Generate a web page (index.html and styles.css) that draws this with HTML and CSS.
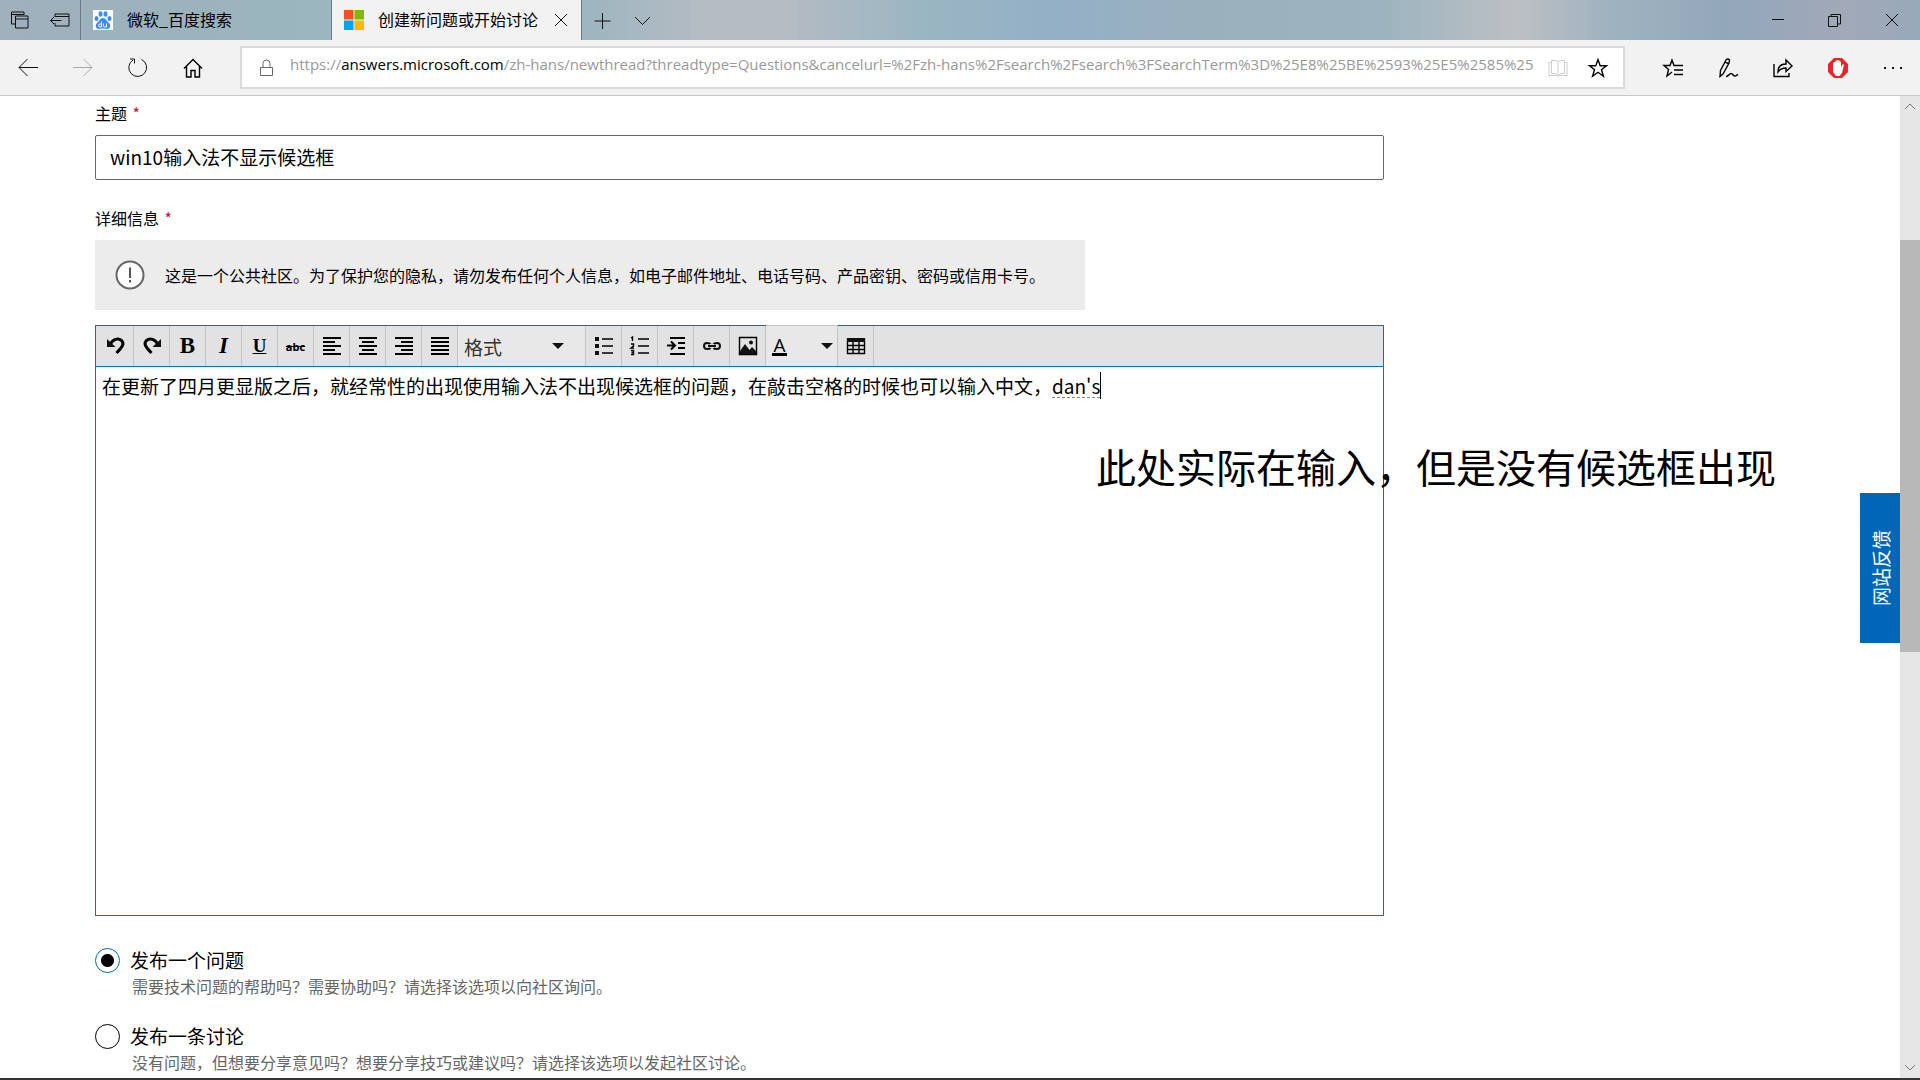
FILE: index.html
```html
<!DOCTYPE html>
<html lang="zh-Hans">
<head>
    <meta charset="UTF-8">
    <meta name="viewport" content="width=device-width, initial-scale=1.0">
    <title>创建新问题或开始讨论</title>
    <link rel="stylesheet" href="styles.css">
</head>
<body>

    <!-- Tab strip -->
    <header class="tab-strip">
        <button class="strip-btn" aria-label="已搁置的标签页">
            <svg width="20" height="20" viewBox="0 0 20 20"><path d="M5 14H1.500V2H14v3M1.500 4.500H14M5.500 6h12.500v12H5.500zM5.500 9H18"/></svg>
        </button>
        <button class="strip-btn" aria-label="搁置标签页">
            <svg width="20" height="20" viewBox="0 0 20 20"><path d="M5 7V4h14v12H5V13M5 6.500h14M0.500 10.500h11M4 7L0.500 10.500L4 14"/></svg>
        </button>
        <div class="tab">
            <svg class="favicon" width="20" height="20" viewBox="0 0 20 20">
                <rect width="20" height="20" fill="#fff"/>
                <g fill="#3b8cff">
                    <ellipse cx="3.500" cy="8.500" rx="2" ry="2.600"/>
                    <ellipse cx="7.500" cy="4" rx="2" ry="2.800"/>
                    <ellipse cx="12.500" cy="4" rx="2" ry="2.800"/>
                    <ellipse cx="16.500" cy="8.500" rx="2" ry="2.600"/>
                    <path d="M10 8c3 0 3.500 3 6 5 2.500 2.500 1 6-2 6-1.500 0-2.500-.5-4-.5s-2.500.5-4 .5c-3 0-4.500-3.500-2-6C6.500 11 7 8 10 8z"/>
                </g>
                <path d="M8.500 11.500v5.500H7a1.500 1.500 0 0 1 0-3h1.500M10.500 13.500v2.500q0 1 1 1h2v-3.500" fill="none" stroke="#fff"/>
            </svg>
            <span class="tab-title">微软_百度搜索</span>
        </div>
        <div class="tab tab-active">
            <svg class="favicon" width="20" height="20" viewBox="0 0 20 20">
                <path fill="#f25022" d="M0 0h9.500v9.500H0z"/><path fill="#7fba00" d="M10.500 0H20v9.500h-9.500z"/>
                <path fill="#00a4ef" d="M0 10.500h9.500V20H0z"/><path fill="#ffb900" d="M10.500 10.500H20V20h-9.500z"/>
            </svg>
            <span class="tab-title">创建新问题或开始讨论</span>
            <button class="tab-close" aria-label="关闭标签页">
                <svg width="14" height="14" viewBox="0 0 14 14"><path d="M1 1l12 12M13 1L1 13"/></svg>
            </button>
        </div>
        <button class="strip-btn" aria-label="新建标签页">
            <svg width="16" height="16" viewBox="0 0 16 16"><path d="M8.500 1v16M0.500 9h16"/></svg>
        </button>
        <button class="strip-btn" aria-label="标签页预览">
            <svg width="16" height="16" viewBox="0 0 16 16"><path d="M1 5l7.500 7.500L16 5"/></svg>
        </button>
        <div class="window-controls">
            <button aria-label="最小化"><svg width="12" height="12" viewBox="0 0 12 12"><path d="M0 5.500h12"/></svg></button>
            <button aria-label="还原"><svg width="13" height="13" viewBox="0 0 13 13"><path d="M0.500 2.500h9v10h-9zM3 2.500V0.500h9.500v9.500H10"/></svg></button>
            <button aria-label="关闭"><svg width="12" height="12" viewBox="0 0 12 12"><path d="M0 0l12 12M12 0L0 12"/></svg></button>
        </div>
    </header>

    <!-- Navigation bar -->
    <nav class="nav-bar">
        <div class="nav-group">
            <button aria-label="后退"><svg width="20" height="20" viewBox="0 0 20 20"><path d="M1 9.500h19M9.500 1L1 9.500 9.500 18"/></svg></button>
            <button class="disabled" aria-label="前进" disabled><svg width="20" height="20" viewBox="0 0 20 20"><path d="M0 9.500h19M10.500 1L19 9.500 10.500 18"/></svg></button>
            <button aria-label="刷新"><svg width="20" height="20" viewBox="0 0 20 20"><path d="M13.500 1.500a8.900 8.900 0 1 1-8.500.5M2 1h4.500v4.500"/></svg></button>
            <button aria-label="主页"><svg width="20" height="20" viewBox="0 0 20 20"><path class="bold" d="M1 10.500L10 1.500l9 9M3.500 8.500V19H8v-6.500h4V19h4.500V8.500"/></svg></button>
        </div>
        <div class="address-bar">
            <svg class="lock" width="16" height="18" viewBox="0 0 16 18"><path d="M1.500 8.500h12v8h-12zM4 8V4.500a3.500 3.500 0 0 1 7 0V8"/></svg>
            <div class="url">https://<span class="host">answers.microsoft.com</span>/zh-hans/newthread?threadtype=Questions&amp;cancelurl=%2Fzh-hans%2Fsearch%2Fsearch%3FSearchTerm%3D%25E8%25BE%2593%25E5%2585%25</div>
            <button class="disabled book" aria-label="阅读视图" disabled><svg width="20" height="20" viewBox="0 0 20 20"><path d="M10 3.500v13M10 3.500Q8 2 3.500 2.500v13Q8 15 10 17.500q2-2.500 6.500-2v-13Q12 2 10 3.500M3 4.500H1v13h7.500l1.500 1 1.500-1H19v-13h-2"/></svg></button>
            <button aria-label="添加到收藏夹"><svg width="20" height="20" viewBox="0 0 20 20"><path class="bold" d="M10 1.500l2.200 6.200h6.300l-5 4 1.900 6.500-5.400-3.900-5.400 3.900 1.900-6.500-5-4h6.300z"/></svg></button>
        </div>
        <div class="nav-group">
            <button aria-label="收藏夹"><svg width="20" height="20" viewBox="0 0 20 20"><path class="bold" d="M13 7.500h-2L9 2 7 7.500H1l4.500 4L4 18l5-4M12 7.500h8M11 12h9M11 16.500h9"/></svg></button>
            <button aria-label="添加笔记"><svg width="20" height="20" viewBox="0 0 20 20"><path class="bold" d="M2 18.500l.5-6L8 2q1.500-2 3.500 0l-.5 3-6 11zM7 4l3.500 1.700M2 18.500L5 16M8 18.500c3 0 3-3 5-3s2 2.500 4 2.500 2-1 3-1.500"/></svg></button>
            <button aria-label="共享"><svg width="20" height="20" viewBox="0 0 20 20"><path class="bold" d="M1 6v12.500h15V15M5 14c0-5.500 3-8 8-8V2l6 6-6 5.500V10c-4 0-6 1-8 4z"/></svg></button>
            <button aria-label="广告拦截"><svg width="20" height="20" viewBox="0 0 20 20"><path class="adblock" d="M6 0h8l6 6v8l-6 6H6l-6-6V6z"/><path class="hand" d="M5 6l1-2h1l1-1.500h1L10 2l1.500.8L13 4v5l2-3 1 .7L14 15l-2.500 3H8l-3-4z"/></svg></button>
            <button aria-label="设置及其他"><svg width="20" height="20" viewBox="0 0 20 20"><path class="dots" d="M1 9h2v2H1zM9 9h2v2H9zM17 9h2v2h-2z"/></svg></button>
        </div>
    </nav>

    <div class="viewport">
        <main>
            <form class="post-form">
                <label class="field-label" for="subject">主题 <span class="required">*</span></label>
                <input type="text" id="subject" value="win10输入法不显示候选框">

                <div class="field-label" id="details-label">详细信息 <span class="required">*</span></div>
                <div class="notice">
                    <svg width="30" height="30" viewBox="0 0 30 30"><circle cx="15" cy="15" r="13.500" fill="#fff" stroke="#666" stroke-width="2"/><path d="M15 7.500v10.500M15 20v2.500" stroke="#555" stroke-width="2"/></svg>
                    <p>这是一个公共社区。为了保护您的隐私，请勿发布任何个人信息，如电子邮件地址、电话号码、产品密钥、密码或信用卡号。</p>
                </div>

                <div class="editor">
                    <div class="editor-toolbar">
                        <button type="button" aria-label="撤消"><svg width="20" height="20" viewBox="0 0 20 20"><path class="heavy" d="M4 8.500C7 3 12 1.500 15.500 4.500c3 3 1.500 6-5 12.500"/><path class="solid" d="M1 3v8h8.500z"/></svg></button>
                        <button type="button" aria-label="恢复"><svg width="20" height="20" viewBox="0 0 20 20"><path class="heavy" d="M16 8.500C13 3 8 1.500 4.500 4.500c-3 3-1.500 6 5 12.500"/><path class="solid" d="M19 3v8h-8.500z"/></svg></button>
                        <button type="button" class="txt-b" aria-label="加粗">B</button>
                        <button type="button" class="txt-i" aria-label="倾斜">I</button>
                        <button type="button" class="txt-u" aria-label="下划线">U</button>
                        <button type="button" class="txt-s" aria-label="删除线">abc</button>
                        <button type="button" aria-label="左对齐"><svg width="20" height="20" viewBox="0 0 20 20"><path class="thick" d="M1 2h18M1 6h12M1 10h18M1 14h12M1 18h18"/></svg></button>
                        <button type="button" aria-label="居中"><svg width="20" height="20" viewBox="0 0 20 20"><path class="thick" d="M1 2h18M4 6h12M1 10h18M4 14h12M1 18h18"/></svg></button>
                        <button type="button" aria-label="右对齐"><svg width="20" height="20" viewBox="0 0 20 20"><path class="thick" d="M1 2h18M7 6h12M1 10h18M7 14h12M1 18h18"/></svg></button>
                        <button type="button" aria-label="两端对齐"><svg width="20" height="20" viewBox="0 0 20 20"><path class="thick" d="M1 2h18M1 6h18M1 10h18M1 14h18M1 18h18"/></svg></button>
                        <div class="format">
                            <select aria-label="格式"><option>格式</option></select>
                            <svg width="12" height="6" viewBox="0 0 12 6"><path class="solid" d="M0 0h12L6 6z"/></svg>
                        </div>
                        <button type="button" aria-label="项目符号列表"><svg width="20" height="20" viewBox="0 0 20 20"><path class="solid" d="M1 1h4v4H1zM1 8h4v4H1zM1 15h4v4H1z"/><path class="bold" d="M8 3h11M8 10h11M8 17h11"/></svg></button>
                        <button type="button" aria-label="编号列表"><svg width="20" height="20" viewBox="0 0 20 20"><path class="bold" d="M1 2l1.500-1v4M1 8h2.500v2L1 12h3M1 14.500h2.500v4H1M1.500 16.500h2M8 3h11M8 10h11M8 17h11"/></svg></button>
                        <button type="button" aria-label="增加缩进"><svg width="20" height="20" viewBox="0 0 20 20"><path class="thick" d="M4 2h15M12 7h7M12 12h7M4 18h15M1 9.500h7M5 5.500l4 4-4 4"/></svg></button>
                        <button type="button" aria-label="插入链接"><svg width="20" height="20" viewBox="0 0 20 20"><path class="link" d="M8.500 8C8 7 7 7 5 7a3 3 0 0 0 0 6c2 0 3 0 3.500-1M11.500 8c.5-1 1.500-1 3.500-1a3 3 0 0 1 0 6c-2 0-3 0-3.500-1M6 10h8"/></svg></button>
                        <button type="button" aria-label="插入图片"><svg width="20" height="20" viewBox="0 0 20 20"><path class="bold" d="M1.500 1.500h17v17h-17z"/><path class="solid" d="M2 18v-3l5-7 4.500 6 2.500-3 4 4v3z"/><circle cx="13" cy="6.500" r="2"/></svg></button>
                        <button type="button" class="color" aria-label="字体颜色"><span class="color-letter">A</span><svg width="12" height="6" viewBox="0 0 12 6"><path class="solid" d="M0 0h12L6 6z"/></svg></button>
                        <button type="button" aria-label="插入表格"><svg width="20" height="20" viewBox="0 0 20 20"><path class="bold" d="M1.500 3h17v14.500h-17zM1.500 9.500h17M1.500 13.500h17M7 5v12.500M13 5v12.500"/><path class="solid" d="M1 2h18v4H1z"/></svg></button>
                    </div>
                    <div class="editor-body" contenteditable="true" role="textbox" aria-multiline="true" aria-labelledby="details-label" spellcheck="false">在更新了四月更显版之后，就经常性的出现使用输入法不出现候选框的问题，在敲击空格的时候也可以输入中文，<span class="composing">dan's</span></div>
                </div>

                <div class="choice">
                    <input type="radio" name="type" id="question" checked>
                    <label for="question">发布一个问题</label>
                    <p>需要技术问题的帮助吗？需要协助吗？请选择该选项以向社区询问。</p>
                </div>
                <div class="choice">
                    <input type="radio" name="type" id="discussion">
                    <label for="discussion">发布一条讨论</label>
                    <p>没有问题，但想要分享意见吗？想要分享技巧或建议吗？请选择该选项以发起社区讨论。</p>
                </div>
            </form>
            <p class="annotation">此处实际在输入，但是没有候选框出现</p>
            <button class="feedback"><span>网站反馈</span></button>
        </main>
        <div class="scrollbar">
            <svg width="12" height="8" viewBox="0 0 12 8"><path d="M1 7l5-5 5 5"/></svg>
            <div class="track"><div class="thumb"></div></div>
            <svg width="12" height="8" viewBox="0 0 12 8"><path d="M1 1l5 5 5-5"/></svg>
        </div>
    </div>
    <footer class="taskbar"></footer>

</body>
</html>
```

FILE: styles.css
```css
/* General Reset */
* {
    margin: 0;
    padding: 0;
    box-sizing: border-box;
}

body {
    height: 100vh;
    display: flex;
    flex-direction: column;
    overflow: hidden;
    background: #fff;
    color: #000;
    font-family: "Noto Sans CJK SC", sans-serif;
    font-size: 16px;
}

button, input, select {
    font-family: inherit;
    font-size: inherit;
    color: inherit;
}

button {
    display: flex;
    align-items: center;
    justify-content: center;
    border: none;
    background: none;
}

svg {
    display: block;
    flex: none;
    overflow: visible;
    fill: none;
    stroke: #111;
}

.bold {
    stroke: #000;
    stroke-width: 1.4;
}

.thick {
    stroke: #000;
    stroke-width: 2;
}

.heavy {
    stroke: #000;
    stroke-width: 3;
}

.solid {
    fill: #111;
    stroke: none;
}

/* Tab strip */
.tab-strip {
    display: flex;
    flex: none;
    height: 40px;
    background: linear-gradient(90deg, #a0b0bc 0%, #9bb3bd 10%, #9cb8c0 20%, #9fb6bf 31%, #b6bcc4 37%, #b4bbc3 41%, #9ab6c2 48%, #93afc6 55%, #9bb0bd 63%, #9cb4bf 72%, #bcc0c4 79%, #9fb2bf 84%, #93a7bb 90%, #a1a9b8 96%, #98a9ba 100%);
}

.strip-btn {
    width: 40px;
}

.tab {
    display: flex;
    align-items: center;
    width: 251px;
    padding-left: 12px;
    border-left: 1px solid #6c7b83;
}

.tab-active {
    background: #f2f2f2;
    border-right: 1px solid #6c7b83;
}

.tab-title {
    flex: 1;
    margin-left: 14px;
    padding-bottom: 2px;
    white-space: nowrap;
}

.favicon {
    stroke: none;
}

.tab-close {
    width: 40px;
    height: 40px;
}

.window-controls {
    display: flex;
    margin-left: auto;
}

.window-controls button {
    width: 57px;
}

/* Navigation bar */
.nav-bar {
    display: flex;
    align-items: center;
    flex: none;
    height: 56px;
    background: #f2f2f2;
    border-bottom: 1px solid #c8c8c8;
}

.nav-group {
    display: flex;
}

.nav-group button {
    width: 55px;
    height: 40px;
}

.disabled svg {
    stroke: #aaa;
}

.disabled.book svg {
    stroke: #ccc;
}

.address-bar {
    display: flex;
    align-items: center;
    flex: 1;
    min-width: 0;
    height: 43px;
    margin: 0 20px;
    padding: 0 5px 0 17px;
    background: #fff;
    border: 2px solid #dadada;
}

.address-bar button {
    width: 40px;
    height: 36px;
}

.address-bar .lock {
    stroke: #666;
}

.url {
    flex: 1;
    min-width: 0;
    margin: 0 0 8px 15px;
    overflow: hidden;
    white-space: nowrap;
    font-family: "Open Sans", sans-serif;
    font-size: 15px;
    line-height: 24px;
    color: #999;
}

.host {
    color: #000;
}

.adblock {
    fill: #e8262a;
    stroke: none;
}

.hand {
    fill: #fff;
    stroke: none;
}

.dots {
    fill: #111;
    stroke: none;
}

/* Page */
.viewport {
    display: flex;
    flex: 1;
    min-height: 0;
}

main {
    position: relative;
    flex: 1;
    min-width: 0;
    padding: 4px 95px 0;
    overflow: hidden;
}

.post-form {
    max-width: 1289px;
}

.field-label {
    display: block;
    line-height: 26px;
}

.required {
    margin-left: 2px;
    color: #c8102e;
}

#subject {
    display: block;
    width: 100%;
    height: 45px;
    margin: 9px 0 25px;
    padding: 0 14px 2px;
    border: 1px solid #666;
    border-radius: 2px;
    font-size: 19px;
}

.notice {
    display: flex;
    align-items: center;
    width: 990px;
    max-width: 100%;
    min-height: 70px;
    margin: 9px 0 15px;
    padding: 0 20px;
    gap: 20px;
    background: #ececec;
}

/* Rich text editor */
.editor {
    border: 1px solid #0072c9;
}

.editor-toolbar {
    display: flex;
    height: 41px;
    padding-left: 2px;
    background: #e2e2e2;
    border-bottom: 1px solid #0072c9;
}

.editor-toolbar button {
    width: 36px;
    border-right: 1px solid #c3c3c3;
}

.link {
    stroke-width: 2;
}

.editor-toolbar circle {
    fill: #111;
    stroke: none;
}

.editor-toolbar .txt-b, .editor-toolbar .txt-i, .editor-toolbar .txt-u {
    font-family: "Liberation Serif", serif;
    font-size: 23px;
    font-weight: bold;
}

.editor-toolbar .txt-i {
    font-style: italic;
}

.editor-toolbar .txt-u {
    font-size: 19px;
    text-decoration: underline;
}

.editor-toolbar .txt-s {
    font-family: "Open Sans", sans-serif;
    font-size: 11px;
    font-weight: bold;
    text-decoration: line-through;
}

.format {
    display: flex;
    align-items: center;
    width: 128px;
    padding: 0 21px 0 6px;
    background: #e8e8e8;
    border-right: 1px solid #c3c3c3;
}

.format select {
    flex: 1;
    min-width: 0;
    border: none;
    background: none;
    appearance: none;
    font-size: 19px;
    color: #333;
}

/* Covers the frame above the colour picker */
.editor-toolbar .color {
    justify-content: space-between;
    width: 72px;
    margin-top: -1px;
    padding: 0 4px 0 6px;
    background: #e8e8e8;
    border-top: 1px solid #c3c3c3;
}

.color-letter {
    width: 15px;
    border-bottom: 3px solid #000;
    font-family: "Open Sans", sans-serif;
    font-size: 19px;
    line-height: 16px;
}

.editor-body {
    min-height: 548px;
    padding: 5px 6px;
    outline: none;
    font-size: 19px;
    line-height: 28px;
}

.composing {
    border-right: 1px solid #000;
    text-decoration: underline dashed #888 1px;
    text-underline-offset: 3px;
}

/* Post type */
.choice {
    display: grid;
    grid-template-columns: 25px 1fr;
    column-gap: 10px;
    align-items: center;
    margin-bottom: 24px;
}

.editor + .choice {
    margin-top: 30px;
}

.choice input {
    width: 25px;
    height: 25px;
    appearance: none;
    border: 1px solid #000;
    border-radius: 50%;
}

.choice input:checked {
    border-color: #0067b8;
    background: radial-gradient(circle, #000 6px, transparent 7px);
}

.choice label {
    font-size: 19px;
    line-height: 28px;
}

.choice p {
    grid-column: 2;
    padding-left: 2px;
    line-height: 24px;
    color: #666;
}

/* Remark over the page */
.annotation {
    position: absolute;
    top: 340px;
    right: 124px;
    font-size: 40px;
    line-height: 60px;
    white-space: nowrap;
}

.feedback {
    position: absolute;
    top: 397px;
    right: 0;
    width: 40px;
    height: 150px;
    background: #0067b8;
    color: #fff;
    font-size: 19px;
}

.feedback span {
    writing-mode: vertical-rl;
    text-orientation: sideways;
    transform: rotate(180deg);
}

/* Scroll bar */
.scrollbar {
    display: flex;
    flex-direction: column;
    align-items: center;
    width: 20px;
    padding: 6px 0;
    background: #e6e6e6;
}

.scrollbar svg {
    stroke: #777;
}

.track {
    flex: 1;
    width: 100%;
    padding-top: 130px;
}

.thumb {
    height: 43%;
    min-height: 412px;
    background: #b8b8b8;
}

.taskbar {
    flex: none;
    height: 2px;
    background: #333;
}
```
